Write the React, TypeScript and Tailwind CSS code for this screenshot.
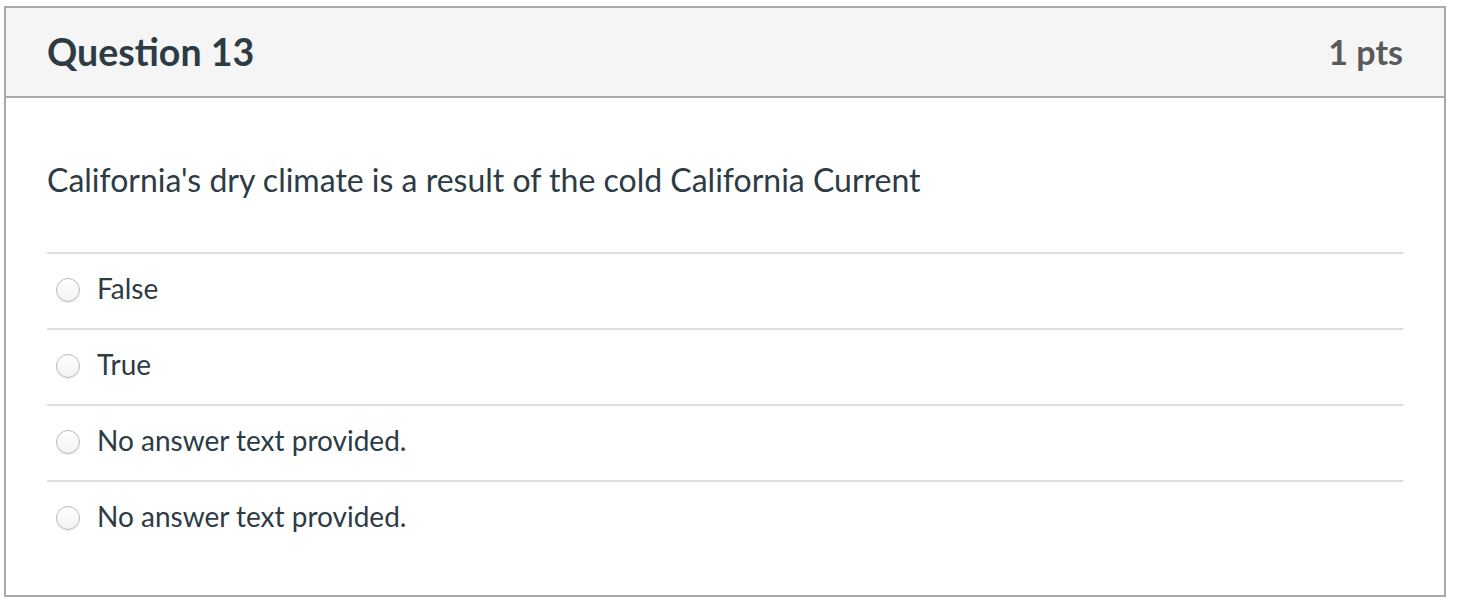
import React from 'react';

const answers = ['False', 'True', 'No answer text provided.', 'No answer text provided.'];

const Radio: React.FC = () => (
  <span className="inline-block h-[24px] w-[24px] shrink-0 rounded-full border border-[#b9b9b9] bg-gradient-to-b from-[#ffffff] to-[#f2f2f2] shadow-[0_1px_1px_rgba(0,0,0,0.08)]" />
);

const App: React.FC = () => {
  return (
    <div className="min-h-[612px] bg-white pl-[4px] pt-[6px] font-['Lato','Open_Sans',sans-serif] text-[#2d3b45]">
      <div className="flex h-[591px] w-[1442px] flex-col border-2 border-[#a9a9a9]">
        <div className="flex h-[90px] shrink-0 items-center justify-between border-b-2 border-[#a9a9a9] bg-[#f5f5f5] px-[41px]">
          <h2 className="text-[37.5px] font-bold leading-none">Question 13</h2>
          <span className="text-[34px] font-bold leading-none text-[#5a5a5a]">1 pts</span>
        </div>
        <div className="px-[41px] pt-[61px]">
          <p className="text-[32px] leading-[42px]">
            California's dry climate is a result of the cold California Current
          </p>
          <div className="mt-[51px]">
            {answers.map((a, i) => (
              <label
                key={i}
                className="flex h-[76px] items-center border-t-2 border-[#dddddd] pl-[9px]"
              >
                <span className="mb-[2px] flex">
                  <Radio />
                </span>
                <span className="ml-[17px] pb-[7px] text-[28px] leading-none">{a}</span>
              </label>
            ))}
          </div>
        </div>
      </div>
    </div>
  );
};

export default App;
